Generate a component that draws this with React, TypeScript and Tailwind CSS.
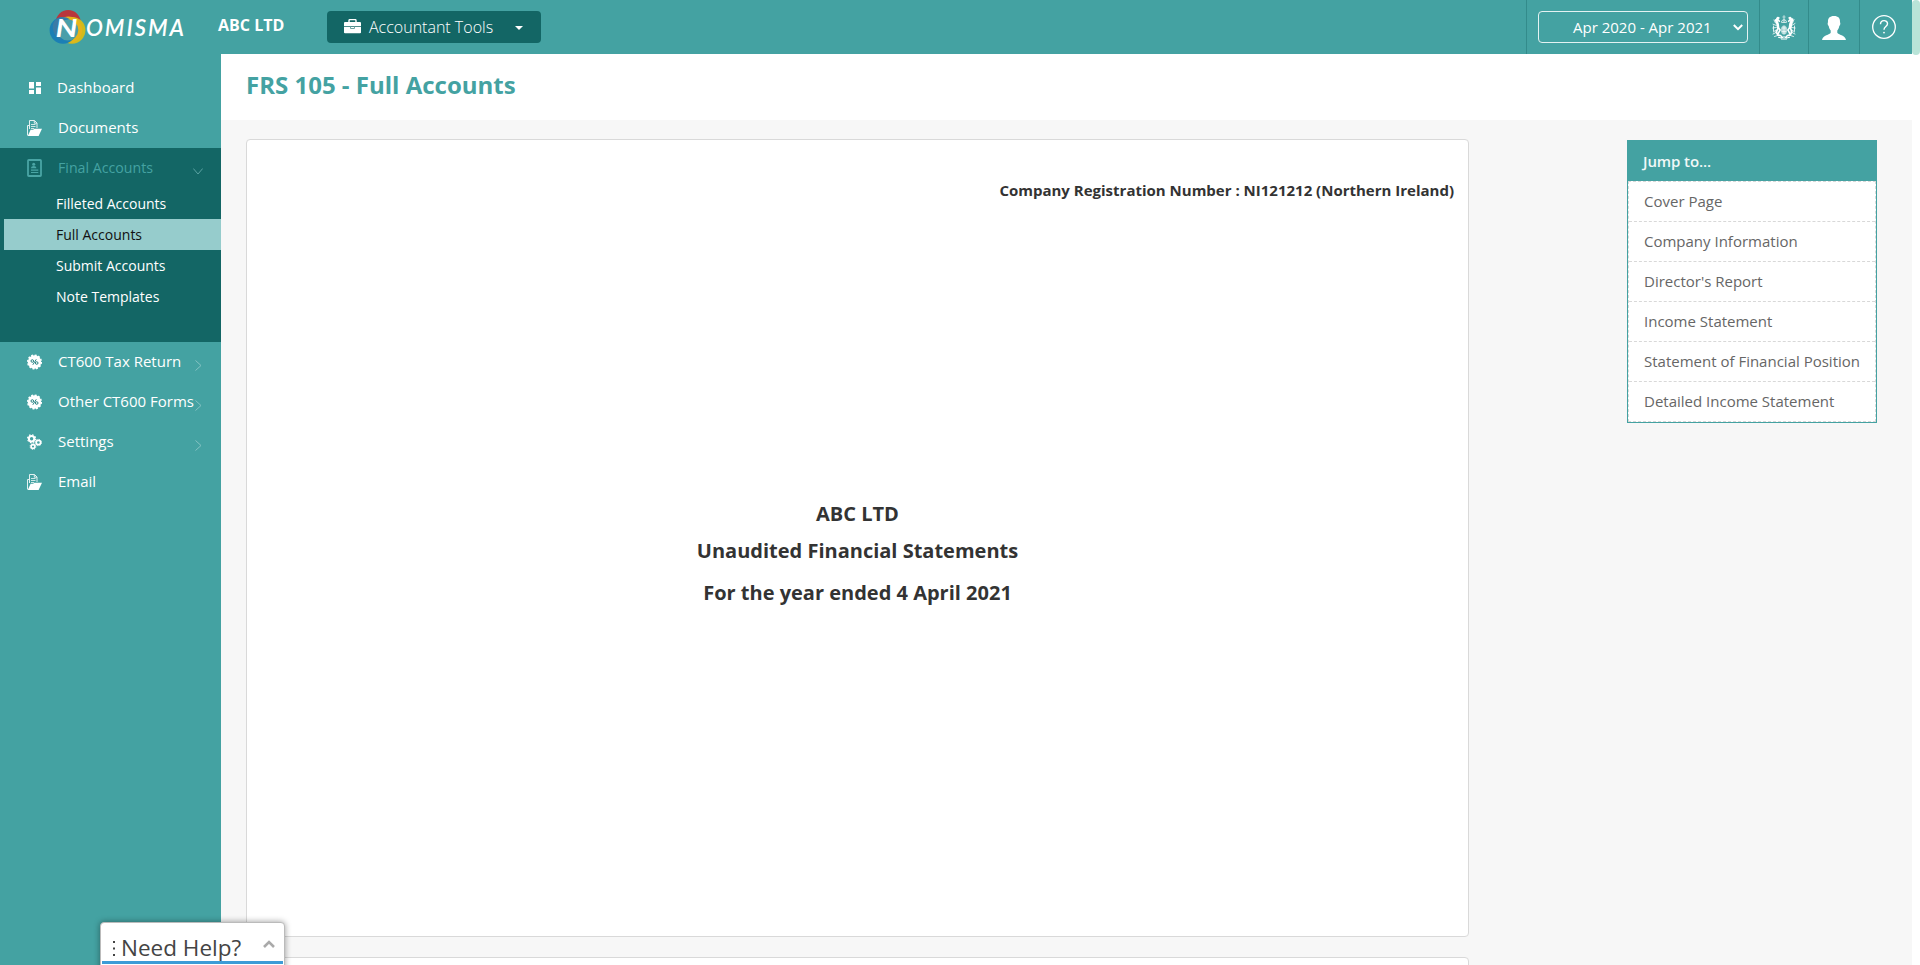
import type { ReactNode } from "react";

const FONT = "font-['Open_Sans','Noto_Sans',sans-serif]";

function Logo() {
  return (
    <svg width="140" height="40" viewBox="0 0 140 40" className="block">
      <circle cx="21.200" cy="17.500" r="12.500" fill="#b9363c" />
      <circle cx="25" cy="25.300" r="13.400" fill="#d2bb1c" />
      <circle cx="16" cy="25.300" r="13.400" fill="#1b7fb5" />
      <path d="M13 14C20 9 31 11.500 34 19C37 27 34 34 27 37L22 38.500C30 34 32 26 28.500 20C25.500 14.500 19 12.500 13 14z" fill="#e6b41c" />
      <path d="M6.500 17.500C10 11.500 18 10.500 22.500 14C16 13.500 11.500 17 10.500 22C9 28 11.500 32 15 35C8 33 4 25 6.500 17.500z" fill="#3b7ba6" />
      <circle cx="20.800" cy="25" r="10.500" fill="#4a9fa9" />
      <text x="8.500" y="31.500" fill="#fff" fontSize="25" fontWeight="700" fontStyle="italic" fontFamily="Lato, sans-serif" textLength="22" lengthAdjust="spacingAndGlyphs">N</text>
      <text x="39" y="31" fill="#fff" fontSize="22.500" fontWeight="600" fontStyle="italic" fontFamily="Lato, sans-serif" textLength="98">OMISMA</text>
    </svg>
  );
}

function DashboardIcon() {
  return (
    <svg width="12" height="12" viewBox="0 0 12 12" fill="#fff" className="ml-[2px] block">
      <path d="M0 0h5v6.6H0zM7 0h5v4H7zM0 8h5v4H0zM7 5.6h5V12H7z" />
    </svg>
  );
}

function FolderIcon() {
  return (
    <svg width="15" height="16" viewBox="0 0 15 16" className="block">
      <path d="M2.5 9V.5h5L10 3v5M7.3.5V3.200H10" fill="none" stroke="#e3f1f1" />
      <path d="M4 4.500h4.500M4 6.500h4.500M4 8.500h3" stroke="#cfe7e7" />
      <path d="M.5 15.500V5.500h1.500" fill="none" stroke="#e3f1f1" />
      <path d="M3.600 9.800h2.600l1-1H15L11.600 16H.8z" fill="#fff" />
    </svg>
  );
}

function ReportIcon() {
  return (
    <svg width="15" height="18" viewBox="0 0 15 18" className="block">
      <rect x="1" y="1" width="13" height="16" rx="0.8" fill="none" stroke="#4aa5a5" strokeWidth="1.8" />
      <circle cx="6.700" cy="5.300" r="1.500" fill="#4aa5a5" />
      <path d="M4 9.200c0-3 5.400-3 5.400 0zM4 10.500h7.300v1.200H4zM4 12.900h7.300v1.200H4z" fill="#4aa5a5" />
    </svg>
  );
}

function PercentIcon() {
  return (
    <svg width="15" height="16" viewBox="0 0 15 16" className="block">
      <circle cx="7.500" cy="8" r="6.700" fill="#fff" />
      <circle cx="7.500" cy="8" r="6.800" fill="none" stroke="#fff" strokeWidth="1.500" strokeDasharray="2 1.560" />
      <g fill="none" stroke="#2b8585" strokeWidth="1">
        <circle cx="5.300" cy="7" r="1.300" />
        <circle cx="9.700" cy="9" r="1.300" />
        <path d="M9.300 5.300L5.800 10.800" />
      </g>
    </svg>
  );
}

function CogsIcon() {
  return (
    <svg width="15" height="16" viewBox="0 0 15 16" fill="none" stroke="#fff" className="block">
      <circle cx="4.600" cy="4.700" r="2.700" strokeWidth="2" />
      <circle cx="4.600" cy="4.700" r="4" strokeWidth="1.200" strokeDasharray="1.570 1.570" />
      <circle cx="11.400" cy="8.500" r="2.200" strokeWidth="1.700" />
      <circle cx="11.400" cy="8.500" r="3.200" strokeWidth="0.900" strokeDasharray="1.250 1.250" />
      <circle cx="6" cy="12.500" r="1.900" strokeWidth="1.600" />
      <circle cx="6" cy="12.500" r="2.900" strokeWidth="0.900" strokeDasharray="1.140 1.140" />
    </svg>
  );
}

function Crest() {
  return (
    <svg width="24" height="25" viewBox="0 0 24 25" fill="none" stroke="#fff" strokeLinecap="round" className="block">
      <path d="M12 .5v3M10.800 2h2.400" strokeWidth="0.600" />
      <path d="M9.500 7c-.5-3 5.500-3 5 0zM12 4v3" strokeWidth="0.800" />
      <ellipse cx="12" cy="15" rx="3" ry="4.500" fill="#fff" fillOpacity="0.600" stroke="none" />
      <path d="M12 11v8M10 13h4M10 16.500h4" strokeWidth="0.600" />
      <path d="M6.800 3C5.500 2 4.600 3.600 4.700 5.500l1.300 3.300.6 4.200 1.500 2M5 3.500l2.300 2.700M3.500 5l1.600 4 .9 4.500L4.200 17l1.600 3 2.700.5M7.500 16l-1.200 2.500" strokeWidth="1.700" />
      <path d="M4.300 10.500L1 9.200M4.300 12.500L.8 13M4 15l-2.700 2M2 5l1.500 3M1 19l4-2M2.500 21.500L7 20M1.500 11v5" strokeWidth="0.800" />
      <path d="M17.200 3C18.500 2 19.400 3.600 19.300 5.500l-1.300 3.300-.6 4.200-1.500 2M19 3.500l-2.300 2.700M20.500 4l-1 5-.9 4.500 1.200 3.500-1.600 3-2.700.5M16.500 16l1.200 2.500" strokeWidth="1.700" />
      <path d="M19.700 10.500L23 8.500M19.700 12.500l3.500.5M20 15l2.700 2M22 4.500L20.500 8M23 19l-4-2M21.500 21.500L17 20M22.500 11v5" strokeWidth="0.800" />
      <path d="M6.500 22.200l2.500.8 1.500-1h3l1.500 1 2.500-.8M9.500 24h5M8.500 20.500l2 2M15.500 20.500l-2 2" strokeWidth="1.100" />
    </svg>
  );
}

function Chevron({ open }: { open?: boolean }) {
  return open ? (
    <svg width="10" height="7" viewBox="0 0 10 7" fill="none" stroke="#5ba3a3" className="absolute left-[193px] top-[20px]">
      <path d="M.3.500L5 6L9.700.500" />
    </svg>
  ) : (
    <svg width="7" height="11" viewBox="0 0 7 11" fill="none" stroke="#84c2c2" className="absolute left-[195px] top-[18px]">
      <path d="M.5.500L6 5.500L.5 10.500" />
    </svg>
  );
}

type NavItemProps = { icon: ReactNode; label: string; chevron?: boolean; open?: boolean; tight?: boolean };

function NavItem({ icon, label, chevron, open, tight }: NavItemProps) {
  return (
    <div className="relative flex h-10 items-center pl-[27px]">
      <div className={"flex items-center " + (tight ? "w-[30px]" : "w-[31px]")}>{icon}</div>
      <span
        className={
          "whitespace-nowrap leading-5 " + (open ? "text-[14.2px] text-[#44a2a2]" : "pb-[2px] text-[15px] text-white")
        }
      >
        {label}
      </span>
      {chevron && <Chevron open={open} />}
    </div>
  );
}

const SUB_ITEMS = ["Filleted Accounts", "Full Accounts", "Submit Accounts", "Note Templates"];
const JUMP_LINKS = [
  "Cover Page",
  "Company Information",
  "Director's Report",
  "Income Statement",
  "Statement of Financial Position",
  "Detailed Income Statement",
];

function Sidebar() {
  return (
    <nav className="w-[221px] shrink-0 bg-[#44a2a2] pt-[14px]">
      <NavItem icon={<DashboardIcon />} label="Dashboard" tight />
      <NavItem icon={<FolderIcon />} label="Documents" />
      <div className="h-[194px] bg-[#136665] pt-[31px]">
        <div className="mt-[-31px]">
          <NavItem icon={<ReportIcon />} label="Final Accounts" chevron open />
        </div>
        <ul>
          {SUB_ITEMS.map((item) => (
            <li
              key={item}
              className={
                "ml-1 flex h-[31px] items-center pl-[52px] text-[14px] " +
                (item === "Full Accounts" ? "bg-[#96cccc] text-[#111]" : "font-medium text-white")
              }
            >
              {item}
            </li>
          ))}
        </ul>
      </div>
      <NavItem icon={<PercentIcon />} label="CT600 Tax Return" chevron />
      <NavItem icon={<PercentIcon />} label="Other CT600 Forms" chevron />
      <NavItem icon={<CogsIcon />} label="Settings" chevron />
      <NavItem icon={<FolderIcon />} label="Email" />
    </nav>
  );
}

function Header() {
  return (
    <header className="flex h-[54px] w-[1912px] shrink-0 bg-[#44a2a2] text-white">
      <div className="w-[218px] pl-[47px] pt-[5px]">
        <Logo />
      </div>
      <div className="w-[109px] pt-[13px] text-[16px] font-bold leading-6">ABC LTD</div>
      <div className="mt-[11px] flex h-8 w-[214px] items-center rounded-[4px] bg-[#136665] pl-[17px]">
        <svg width="17" height="15" viewBox="0 0 17 15" className="mt-[-2px] block">
          <path d="M5 3V1.500Q5 .6 6 .6h5q1 0 1 .9V3" fill="none" stroke="#fff" strokeWidth="1.400" />
          <path d="M1 3h15q1 0 1 1v3.300H0V4q0-1 1-1zM0 8.100h17V13.500q0 .8-1 .8H1q-1 0-1-.8z" fill="#fff" />
          <path d="M6.500 7.600v1.900h4V7.600" fill="none" stroke="#6fa5a4" />
        </svg>
        <span className="ml-2 w-[146px] text-[16px] font-light leading-6">Accountant Tools</span>
        <svg width="8" height="4" viewBox="0 0 8 4" fill="#fff" className="mt-[2px] block">
          <path d="M0 0h8L4 4z" />
        </svg>
      </div>
      <div className="ml-auto flex w-[233px] border-l border-[#338b8b] pl-[11px] pt-[11px]">
        <div className="flex h-8 w-[210px] items-center rounded-[4px] border border-[#e4f2f2] pl-[34px] text-[15px]">
          <span className="w-[160px] whitespace-nowrap">Apr 2020 - Apr 2021</span>
          <svg width="10" height="7" viewBox="0 0 10 7" fill="none" stroke="#fff" strokeWidth="2" className="block">
            <path d="M.8 1L5 5.200L9.200 1" />
          </svg>
        </div>
      </div>
      <div className="w-[49px] border-l border-[#338b8b] pl-3 pt-[15px]">
        <Crest />
      </div>
      <div className="w-[51px] border-l border-[#338b8b] pl-[13px] pt-4">
        <svg width="24" height="24" viewBox="0 0 24 24" fill="#fff" className="block">
          <path d="M12 0c4.300 0 6.300 2.200 6 6.300.7.800.3 3.200-.7 3.700-.3 2-1.300 3.700-2 4.500v2.300c1 2.200 7.700 2 8.700 7.200H0c1-5.200 7.700-5 8.700-7.200v-2.300c-.7-.8-1.700-2.500-2-4.500-1-.5-1.400-2.900-.7-3.700C5.700 2.200 7.700 0 12 0z" />
        </svg>
      </div>
      <div className="w-[53px] border-l border-[#338b8b] pl-3 pt-[15px]">
        <svg width="24" height="24" viewBox="0 0 24 24" fill="none" stroke="#fff" className="block">
          <circle cx="12" cy="12" r="11.300" strokeWidth="1.300" />
          <path d="M8.500 9.300C8.500 4.300 15.500 4.700 15.500 8.700C15.500 11.600 12 11.500 12 14.800" strokeWidth="1.400" />
          <circle cx="12" cy="17.600" r="0.900" fill="#fff" stroke="none" />
        </svg>
      </div>
    </header>
  );
}

function JumpPanel() {
  return (
    <aside className="mt-5 ml-[158px] h-[283px] w-[250px] border border-[#44a2a2] bg-white">
      <div className="flex h-10 items-center bg-[#44a2a2] pl-[15px] text-[15px] font-semibold tracking-[-0.1px] text-[#f0f8f8]">
        Jump to...
      </div>
      <ul className="h-[241px] border border-dashed border-[#d8d8d8]">
        {JUMP_LINKS.map((link) => (
          <li
            key={link}
            className="flex h-10 items-center whitespace-nowrap border-b border-dashed border-[#d8d8d8] pl-[15px] text-[15px] text-[#666] last:h-[39px] last:border-b-0"
          >
            {link}
          </li>
        ))}
      </ul>
    </aside>
  );
}

export default function App() {
  return (
    <div className={"relative flex h-[965px] w-[1920px] flex-col overflow-hidden bg-white " + FONT}>
      <Header />
      <div className="flex min-h-0 flex-1">
        <Sidebar />
        <main className="w-[1691px] shrink-0">
          <div className="h-[66px] bg-white pl-[25px] pt-[14px]">
            <h1 className="text-[24px] font-bold leading-[34px] text-[#44a2a2]">FRS 105 - Full Accounts</h1>
          </div>
          <div className="flex h-[845px] overflow-hidden bg-[#f7f7f7] pl-[25px]">
            <div className="w-[1223px] shrink-0 pt-[19px] text-[#333]">
              <section className="h-[798px] rounded-[4px] border border-[#d9d9d9] bg-white">
                <div className="pr-[14px] pt-[38px] text-right text-[15px] font-bold leading-6">
                  Company Registration Number : NI121212 (Northern Ireland)
                </div>
                <div className="pt-[299px] text-center text-[20px] font-bold leading-[26px]">
                  <div>ABC LTD</div>
                  <div className="pt-[11px]">Unaudited Financial Statements</div>
                  <div className="pt-[16px]">For the year ended 4 April 2021</div>
                </div>
              </section>
              <section className="mt-5 h-20 rounded-[4px] border border-[#d9d9d9] bg-white" />
            </div>
            <JumpPanel />
          </div>
        </main>
      </div>
      <div className="absolute right-0 top-0 h-[55px] w-2 rounded-[4px] bg-[#b9e4d8]" />
      <div className="absolute left-[100px] top-[922px] flex h-[60px] w-[185px] rounded-[4px] border border-[#bbb] bg-white shadow-[0_0_6px_rgba(0,0,0,0.4)]">
        <div className="flex h-[42px] w-full flex-col px-[1px]">
          <div className="flex h-[38px] items-center pl-[10px] pt-[12px]">
            <svg width="4" height="16" viewBox="0 0 4 16" fill="#444" className="mt-[1px] block">
              <path d="M1 0h2v2H1zM1 6.500h2v2H1zM1 13h2v2H1z" />
            </svg>
            <span className="ml-[5px] w-[142px] whitespace-nowrap text-[22.500px] leading-6 text-[#444]">Need Help?</span>
            <svg width="12" height="8" viewBox="0 0 12 8" fill="none" stroke="#aaa" strokeWidth="2.600" className="mt-[-9px] block">
              <path d="M1 7l5-5 5 5" />
            </svg>
          </div>
          <div className="h-[3px] bg-[#3c9cd7]" />
        </div>
      </div>
    </div>
  );
}
